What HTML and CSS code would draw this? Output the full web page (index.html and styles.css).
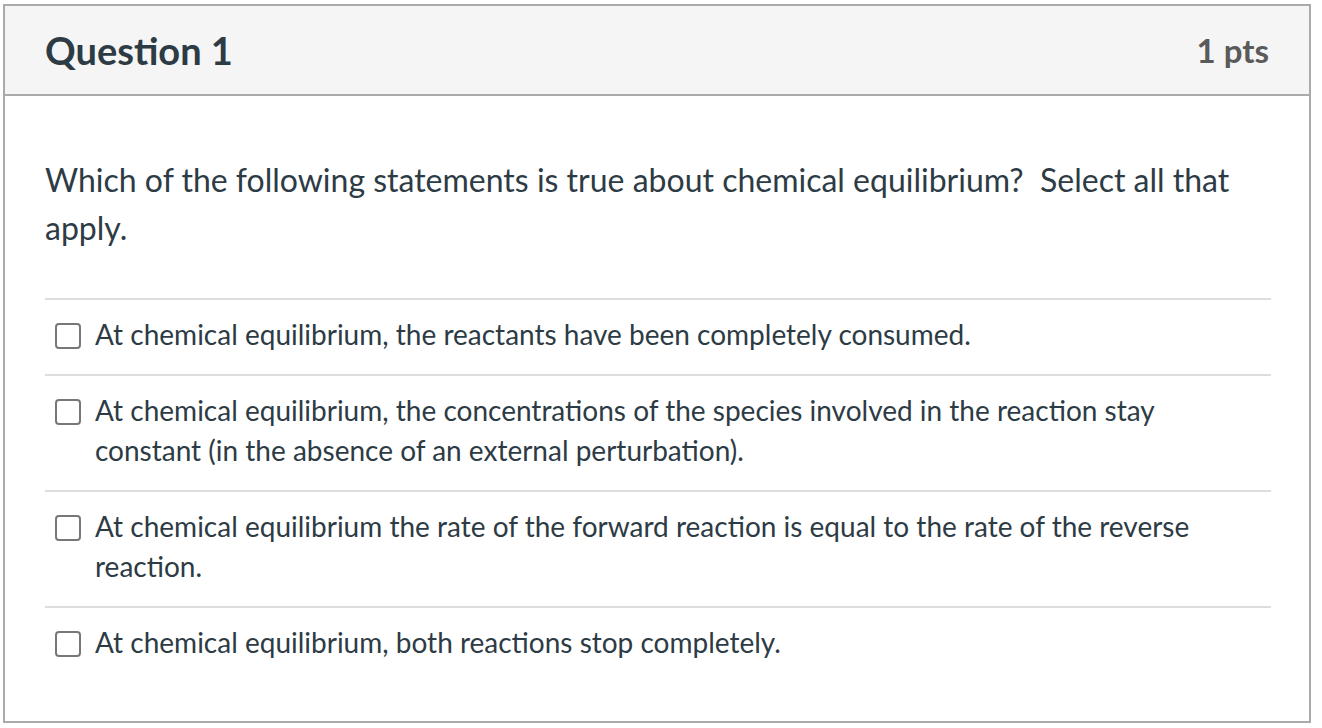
FILE: index.html
```html
<!DOCTYPE html>
<html>
<head>
<meta charset="utf-8">
<link rel="stylesheet" href="styles.css">
</head>
<body>
<div class="question">
  <div class="header">
    <h2 class="title">Question 1</h2>
    <div class="pts">1 pts</div>
  </div>
  <div class="content">
    <p class="text">Which of the following statements is true about chemical equilibrium?&nbsp; Select all that apply.</p>
    <div class="answers">
      <label class="answer"><span class="box"></span><span class="label">At chemical equilibrium, the reactants have been completely consumed.</span></label>
      <label class="answer"><span class="box"></span><span class="label">At chemical equilibrium, the concentrations of the species involved in the reaction stay constant (in the absence of an external perturbation).</span></label>
      <label class="answer"><span class="box"></span><span class="label">At chemical equilibrium the rate of the forward reaction is equal to the rate of the reverse reaction.</span></label>
      <label class="answer last"><span class="box"></span><span class="label">At chemical equilibrium, both reactions stop completely.</span></label>
    </div>
  </div>
</div>
</body>
</html>
```
FILE: styles.css
```css
html, body { margin: 0; padding: 0; background: #fff; }
body { font-family: Lato, "Noto Sans", sans-serif; color: #2d3b45; }
.question {
  margin: 4px 0 0 3px;
  width: 1304px;
  height: 715px;
  border: 2px solid #aaaaaa;
  box-sizing: content-box;
}
.header {
  display: flex;
  justify-content: space-between;
  align-items: center;
  height: 88px;
  background: #f5f5f5;
  border-bottom: 2px solid #aaaaaa;
  padding: 0 40px;
}
.title { margin: 0; font-size: 38px; font-weight: 700; color: #2d3b45; }
.pts { font-size: 33px; font-weight: 700; color: #5a5a5a; }
.content { padding: 60px 38px 0 40px; }
.text { margin: 0; font-size: 32px; line-height: 48px; }
.answers { margin-top: 46px; border-top: 2px solid #dddddd; }
.answer {
  display: flex;
  align-items: flex-start;
  gap: 14px;
  padding: 14px 50px 20px 10px;
  border-bottom: 2px solid #dddddd;
  font-size: 28px;
  line-height: 40px;
}
.answer.last { border-bottom: none; }
.box {
  flex: none;
  width: 22px; height: 22px;
  margin-top: 9px;
  border: 2px solid #777;
  border-radius: 4px;
  background: #fff;
}
```
